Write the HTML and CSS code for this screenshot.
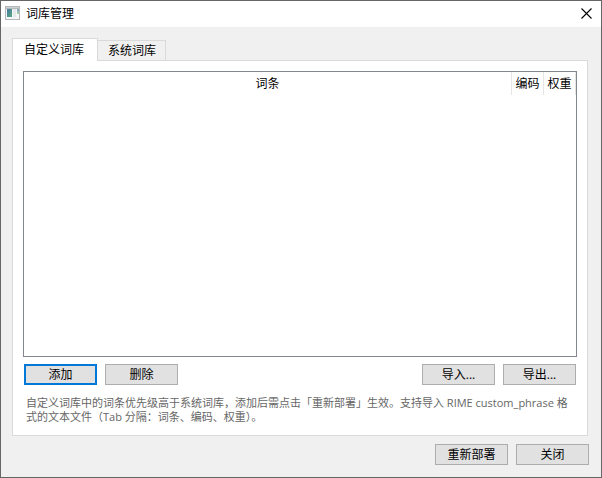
FILE: index.html
```
<!DOCTYPE html>
<html lang="zh-CN">
<head>
  <meta charset="UTF-8" />
  <meta name="viewport" content="width=device-width, initial-scale=1.0" />
  <title>词库管理</title>
  <link rel="stylesheet" href="styles.css">
</head>
<body>
  <div class="window">
    <header class="titlebar">
      <svg class="app-icon" width="16" height="16" viewBox="0 0 16 16" shape-rendering="crispEdges" aria-hidden="true">
        <defs>
          <linearGradient id="panel" x1="0" y1="0" x2="1" y2="1">
            <stop offset="0" stop-color="#4a78a8" />
            <stop offset="1" stop-color="#55a97a" />
          </linearGradient>
          <linearGradient id="side" x1="0" y1="0" x2="0" y2="1">
            <stop offset="0" stop-color="#7f9fc8" />
            <stop offset="1" stop-color="#a9d6a5" />
          </linearGradient>
        </defs>
        <rect x="0" y="0" width="15" height="14" fill="#b4b8bb" />
        <rect x="1" y="1" width="13" height="1" fill="#cdd2d5" />
        <rect x="1" y="3" width="13" height="10" fill="#f4f5f6" />
        <rect x="2" y="3" width="5" height="8" fill="url(#panel)" />
        <rect x="8" y="3" width="3" height="8" fill="#e6e9eb" />
        <rect x="12" y="3" width="2" height="5" fill="url(#side)" />
      </svg>
      <h1 class="title">词库管理</h1>
      <button class="close-btn" type="button" aria-label="关闭窗口">
        <svg width="11" height="11" viewBox="0 0 11 11" aria-hidden="true">
          <path d="M0.5 0.5L10.5 10.5M10.5 0.5L0.5 10.5" stroke="#000" stroke-width="1.1" fill="none" />
        </svg>
      </button>
    </header>

    <main class="content">
      <div class="tabs" role="tablist">
        <button class="tab active" type="button" role="tab" aria-selected="true">自定义词库</button>
        <button class="tab" type="button" role="tab" aria-selected="false">系统词库</button>
      </div>

      <section class="pane" role="tabpanel">
        <div class="table-box">
          <table>
            <thead>
              <tr><th>词条</th><th class="narrow">编码</th><th class="narrow">权重</th></tr>
            </thead>
            <tbody></tbody>
          </table>
        </div>

        <div class="toolbar">
          <button class="btn default" type="button">添加</button>
          <button class="btn" type="button">删除</button>
          <span class="spacer"></span>
          <button class="btn" type="button">导入...</button>
          <button class="btn" type="button">导出...</button>
        </div>

        <p class="hint">自定义词库中的词条优先级高于系统词库，添加后需点击「重新部署」生效。支持导入 RIME custom_phrase 格式的文本文件（Tab 分隔：词条、编码、权重）。</p>
      </section>

      <footer class="actions">
        <button class="btn" type="button">重新部署</button>
        <button class="btn" type="button">关闭</button>
      </footer>
    </main>
  </div>
</body>
</html>
```

FILE: styles.css
```
* {
  box-sizing: border-box;
}

body {
  margin: 0;
  font-family: "Open Sans", "Noto Sans CJK SC", sans-serif;
  font-size: 12px;
  line-height: 16px;
  color: #000;
}

button {
  font: inherit;
  color: inherit;
}

.window {
  display: flex;
  flex-direction: column;
  min-height: 100vh;
  background: #f0f0f0;
  border: 1px solid #666;
}

.titlebar {
  display: flex;
  align-items: center;
  height: 26px;
  padding: 0 4px 1px;
  background: #fff;
}

.title {
  flex: 1;
  margin: 0 0 0 5px;
  font-size: 12px;
  font-weight: normal;
}

.close-btn {
  display: flex;
  padding: 5px;
  background: none;
  border: none;
}

.content {
  flex: 1;
  display: flex;
  flex-direction: column;
  padding: 11px 12px 12px 11px;
}

.tabs {
  display: flex;
  align-items: flex-end;
}

.tab {
  height: 20px;
  padding: 0 9px 0 10px;
  background: #f0f0f0;
  border: 1px solid #d9d9d9;
  border-bottom: none;
  border-left: none;
}

/* the selected tab covers the top border of the pane */
.tab.active {
  position: relative;
  height: 23px;
  margin-bottom: -1px;
  padding: 0 13px 0 11px;
  background: #fff;
  border-left: 1px solid #d9d9d9;
}

.pane {
  flex: 1;
  display: flex;
  flex-direction: column;
  margin-right: 1px;
  padding: 10px 10px 11px;
  background: #fff;
  border: 1px solid #d9d9d9;
}

.table-box {
  flex: 1;
  border: 1px solid #828790;
}

table {
  width: 100%;
  table-layout: fixed;
  border-collapse: collapse;
}

th {
  height: 23px;
  padding: 0;
  font-weight: normal;
  border-right: 1px solid #e5e5e5;
}

.narrow {
  width: 32px;
}

.toolbar {
  display: flex;
  gap: 8px;
  margin: 7px 1px 0;
}

.spacer {
  flex: 1;
}

.btn {
  width: 73px;
  height: 21px;
  padding: 0;
  line-height: 16px;
  background: #e1e1e1;
  border: 1px solid #adadad;
}

.btn.default {
  border: 2px solid #0078d7;
}

.hint {
  margin: 11px 3px 0;
  font-size: 11px;
  line-height: 14px;
  color: #666;
}

.actions {
  display: flex;
  justify-content: flex-end;
  gap: 8px;
  margin-top: 8px;
}
```
